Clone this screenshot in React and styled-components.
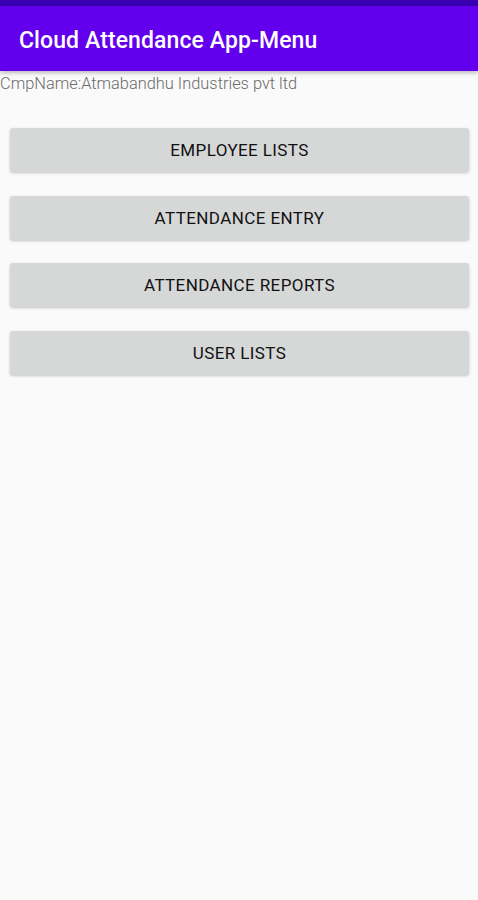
import styled, { createGlobalStyle } from "styled-components";

//------------------------------------------------------------------->

const GlobalStyle = createGlobalStyle`
  body {
    margin: 0;
    background-color: #fafafa;
    font-family: Roboto, "Liberation Sans", sans-serif;
  }
`;
const Screen = styled.div`
  display: flex;
  flex-direction: column;
  width: 478px;
  height: 900px;
  background-color: #fafafa;
  overflow: hidden;
`;
const StatusBar = styled.div`
  height: 6px;
  background-color: #3700b3;
`;
const AppBar = styled.header`
  display: flex;
  align-items: center;
  height: 65px;
  padding: 0 19px;
  background-color: #6200ee;
  box-shadow: 0 2px 4px rgb(0, 0, 0, 0.25);
  z-index: 1;
`;
const Title = styled.h1`
  margin: 0;
  padding-top: 4px;
  color: #ffffff;
  font-size: 23px;
  font-weight: 500;
  letter-spacing: 0.1px;
`;
const CompanyName = styled.div`
  padding: 2px 0 0 0;
  height: 22px;
  color: #6b6b6b;
  font-size: 16.4px;
  font-weight: 300;
  line-height: 22px;
`;
const Menu = styled.nav`
  display: flex;
  flex-direction: column;
  gap: 23.5px;
  padding: 33px 9px 0 10px;
`;
const MenuButton = styled.button`
  height: 44px;
  border: none;
  border-radius: 3px;
  background-color: #d6d7d7;
  box-shadow: 0 1px 3px rgb(0, 0, 0, 0.22);
  color: #111111;
  font-family: Roboto, "Liberation Sans", sans-serif;
  font-size: 17px;
  font-weight: 400;
  letter-spacing: 0.4px;
  text-transform: uppercase;
  cursor: pointer;
`;
//------------------------------------------------------------------->
const items = [
  "Employee Lists",
  "Attendance Entry",
  "Attendance Reports",
  "User Lists",
];

function App() {
  return (
    <>
      <GlobalStyle />
      <Screen>
        <StatusBar />
        <AppBar>
          <Title>Cloud Attendance App-Menu</Title>
        </AppBar>
        <CompanyName>CmpName:Atmabandhu Industries pvt ltd</CompanyName>
        <Menu>
          {items.map((item) => (
            <MenuButton key={item}>{item}</MenuButton>
          ))}
        </Menu>
      </Screen>
    </>
  );
}

export default App;
